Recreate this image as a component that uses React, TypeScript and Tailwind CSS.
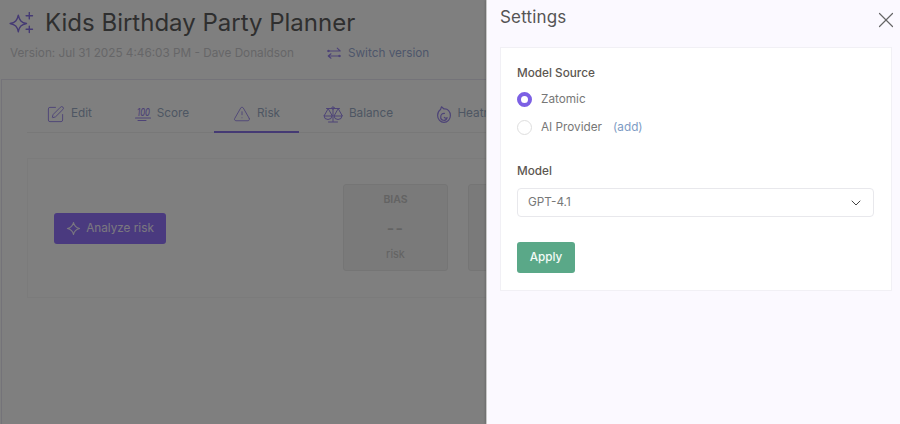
import React from "react";
import { SquarePen, TriangleAlert, X, ChevronDown } from "lucide-react";

function Sparkles({ className }: { className?: string }) {
  return (
    <svg viewBox="0 0 25 22" fill="none" stroke="currentColor" strokeWidth="1.4" strokeLinejoin="round" strokeLinecap="round" className={className}>
      <path d="M9.300 3.200c1.100 5.300 3 7.200 8.200 8.300-5.200 1.100-7.100 3-8.200 8.300-1.100-5.300-3-7.200-8.200-8.300 5.200-1.100 7.100-3 8.200-8.300z" />
      <path d="M20.300 .5v6.400M17.100 3.700h6.400M20.300 14.100v6.400M17.100 17.300h6.400" />
    </svg>
  );
}

function SwitchIcon({ className }: { className?: string }) {
  return (
    <svg viewBox="0 0 14 13" fill="none" stroke="currentColor" strokeWidth="1.100" strokeLinecap="round" strokeLinejoin="round" className={className}>
      <path d="M.6 4h12.600L10.200 1.200" />
      <path d="M13.400 9H2.200M4 6.800 1.200 9 4 11.200" />
      <circle cx="1.600" cy="4" r=".6" />
      <circle cx="12.400" cy="9" r=".6" />
    </svg>
  );
}

function HundredIcon({ className }: { className?: string }) {
  return (
    <svg viewBox="0 0 16 15" fill="none" className={className}>
      <text x="2" y="8.500" fill="currentColor" fontSize="10" fontStyle="italic" fontWeight="500" fontFamily="Inter, sans-serif" textLength="13" lengthAdjust="spacingAndGlyphs">100</text>
      <path d="M.5 11h15M3 13.500h8" stroke="currentColor" strokeWidth="1.100" strokeLinecap="round" />
    </svg>
  );
}

function ScaleIcon({ className }: { className?: string }) {
  return (
    <svg viewBox="0 0 20 17" fill="none" stroke="currentColor" strokeWidth="1" strokeLinecap="round" strokeLinejoin="round" className={className}>
      <path d="M10 3v12.500M5.500 16h9M3.500 2.500h13" />
      <circle cx="10" cy="2" r="1.200" />
      <path d="M5 3 1 10h8zM15 3l-4 7h8z" />
      <path d="M1 10a4 3.500 0 0 0 8 0M11 10a4 3.500 0 0 0 8 0" />
    </svg>
  );
}

function FlameIcon({ className }: { className?: string }) {
  return (
    <svg viewBox="0 0 14 17" fill="none" stroke="currentColor" strokeWidth="1.200" strokeLinecap="round" strokeLinejoin="round" className={className}>
      <path d="M4.500 .8 7 3c3.800-.4 6.400 2.400 6.400 6.500a6.400 6.900 0 0 1-12.800 0C.6 6.800 2 4.600 3.500 3.600z" />
      <path d="M3.800 10.500c0-2 1.400-3.200 3.600-3.100M3.800 10.500a3.200 3.200 0 0 0 6.300 1.200c-1 .5-2.200.4-2.800-.4" />
    </svg>
  );
}

function Tab({ icon, label, active }: { icon: React.ReactNode; label: string; active?: boolean }) {
  return (
    <div className={`flex h-[37px] shrink-0 items-center justify-center gap-[6px] text-[11.75px] text-[#9cadc6] ${active ? "border-b-2 border-[#8a74e8]" : "pb-[1px]"}`}>
      {icon}
      <span>{label}</span>
    </div>
  );
}

export default function App() {
  return (
    <div className="relative h-[424px] w-[900px] overflow-hidden bg-white font-['Inter',sans-serif]">
      {/* Page below the scrim */}
      <div className="flex h-full w-full flex-col">
        <div className="flex h-[79px] shrink-0 flex-col pl-[10px] pt-[9px]">
          <div className="flex h-[28px] items-center gap-[11px]">
            <Sparkles className="ml-[-1px] h-[22px] w-[25px] text-[#8a74e8]" />
            <h1 className="text-[24px] leading-[28px] text-[#5e5e5e]">Kids Birthday Party Planner</h1>
          </div>
          <div className="mt-[7px] flex items-center text-[11.75px] leading-[18px] text-[#cdcdd0]">
            <span>Version: Jul 31 2025 4:46:03 PM - Dave Donaldson</span>
            <SwitchIcon className="ml-[33px] h-[13px] w-[14px] text-[#9a87ee]" />
            <span className="ml-[7px] text-[#9cadd6]">Switch version</span>
          </div>
        </div>
        <div className="ml-[1px] flex-1 border-l border-t border-[#e9e7f3] pl-[25px] pt-[16px]">
          <div className="flex h-[37px] w-[900px] items-start border-b border-[#f1f1f1]">
            <div className="ml-[1px] flex w-[900px]">
              <div className="w-[82px]">
                <Tab icon={<SquarePen className="h-[19px] w-[19px] text-[#9a87ee]" strokeWidth={1.2} />} label="Edit" />
              </div>
              <div className="w-[104px]">
                <Tab icon={<HundredIcon className="h-[15px] w-[16px] overflow-visible text-[#9a87ee]" />} label="Score" />
              </div>
              <div className="w-[85px]">
                <Tab active icon={<TriangleAlert className="h-[18px] w-[18px] text-[#9a87ee]" strokeWidth={1.2} />} label="Risk" />
              </div>
              <div className="w-[118px]">
                <Tab icon={<ScaleIcon className="h-[17px] w-[20px] text-[#9a87ee]" />} label="Balance" />
              </div>
              <div className="ml-[-1px] w-[113px]">
                <Tab icon={<FlameIcon className="h-[17px] w-[14px] text-[#9a87ee]" />} label="Heatmap" />
              </div>
            </div>
          </div>
          <div className="mt-[25px] flex h-[140px] w-[900px] items-center border border-[#f6f6f6] pl-[26px]">
            <button className="flex h-[31px] w-[112px] items-center justify-center gap-[5px] rounded-[3px] bg-[#9474ff] pt-[1px] text-[11.75px] text-[#f4efff]">
              <svg viewBox="0 0 16 16" fill="none" stroke="currentColor" strokeWidth="1.100" strokeLinejoin="round" className="h-[15px] w-[15px]">
                <path d="M8 1.500c.8 4 2.500 5.700 6.500 6.500-4 .8-5.700 2.500-6.500 6.500-.8-4-2.500-5.700-6.500-6.500 4-.8 5.700-2.500 6.500-6.500z" />
              </svg>
              Analyze risk
            </button>
            <div className="mb-[2px] ml-[177px] flex h-[87px] w-[105px] shrink-0 flex-col items-center rounded-[3px] border border-[#ebebeb] bg-[#f4f4f4] pt-[8px] text-[#c6c6c6]">
              <span className="text-[10.500px] font-semibold leading-[14px]">BIAS</span>
              <span className="mt-[14px] text-[16px] font-semibold leading-[14px] tracking-[0.08em]">--</span>
              <span className="mt-[12px] text-[11px] leading-[14px]">risk</span>
            </div>
            <div className="mb-[2px] ml-[20px] h-[87px] w-[105px] shrink-0 rounded-[3px] border border-[#ebebeb] bg-[#f4f4f4]" />
          </div>
        </div>
      </div>

      {/* Scrim */}
      <div className="absolute inset-0 bg-black/50" />

      {/* Drawer */}
      <aside className="absolute bottom-0 right-0 top-0 flex w-[414px] flex-col border-l border-[#c8c8c8] bg-[#fbf9ff] pl-[13px] pr-[8px] pt-[7px] shadow-[-1px_0_2px_rgba(0,0,0,0.15)]">
        <div className="flex h-[40px] items-start justify-between">
          <h2 className="text-[17px] leading-[21px] tracking-[0.01em] text-[#555555]">Settings</h2>
          <X className="mr-[-7px] h-[26px] w-[26px] text-[#666666]" strokeWidth={1.1} />
        </div>
        <div className="flex h-[244px] flex-col border border-[#f1f0f5] bg-white pl-[16px] pr-[17px] pt-[17px]">
          <div className="text-[11.75px] font-medium leading-[16px] text-[#5c5650]">Model Source</div>
          <div className="mt-[11px] flex h-[15px] items-center gap-[9px]">
            <span className="h-[15px] w-[15px] rounded-full border-[4px] border-[#7c60e4] bg-white" />
            <span className="text-[11.75px] text-[#777777]">Zatomic</span>
          </div>
          <div className="mt-[13px] flex h-[15px] items-center gap-[9px]">
            <span className="h-[15px] w-[15px] rounded-full border border-[#dedede] bg-white" />
            <span className="text-[11.75px] text-[#777777]">AI Provider</span>
            <span className="ml-[2px] text-[11.75px] text-[#7d9bc4]">(add)</span>
          </div>
          <div className="mt-[28px] text-[11.75px] font-medium leading-[16px] text-[#5c5650]">Model</div>
          <div className="mt-[9px] flex h-[29px] items-center justify-between rounded-[4px] border border-[#e8e8ec] pl-[10px] pr-[9px] pt-[1px] text-[11.75px] text-[#777777]">
            <span>GPT-4.1</span>
            <ChevronDown className="h-[16px] w-[16px] text-[#444444]" strokeWidth={1.5} />
          </div>
          <button className="mt-[25px] h-[31px] w-[58px] rounded-[3px] bg-[#5aa888] pt-[1px] text-[11.75px] font-medium text-[#f2fbf6]">Apply</button>
        </div>
      </aside>
    </div>
  );
}
